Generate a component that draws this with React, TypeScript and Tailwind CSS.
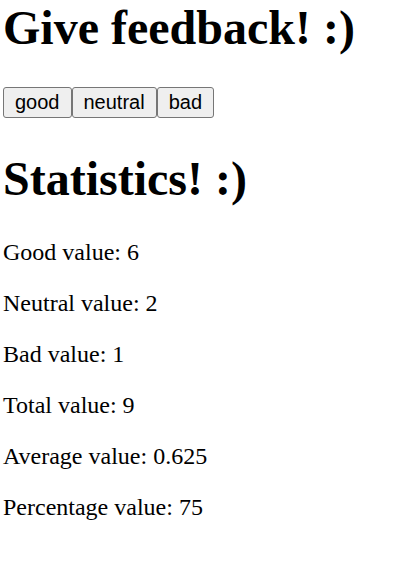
import React from "react";

const btn =
  "h-[31px] border border-[#767676] rounded-[3px] bg-[#efefef] px-[11px] text-[20px] leading-[23px] text-black font-['Liberation_Sans',Arial,sans-serif]";

const stats = [
  "Good value: 6",
  "Neutral value: 2",
  "Bad value: 1",
  "Total value: 9",
  "Average value: 0.625",
  "Percentage value: 75",
];

export default function App() {
  return (
    <div className="pl-[3px] text-black bg-white min-h-[561px] font-['Liberation_Serif','Times_New_Roman',serif]">
      <h1 className="text-[48px] font-bold leading-[55px] mb-[32px]">Give feedback! :)</h1>
      <div className="flex h-[32px] items-start">
        <button className={btn}>good</button>
        <button className={btn}>neutral</button>
        <button className={btn}>bad</button>
      </div>
      <h1 className="text-[48px] font-bold leading-[55px] mt-[32px] mb-[33px]">Statistics! :)</h1>
      <div className="flex flex-col gap-[24px]">
        {stats.map((s) => (
          <p key={s} className="text-[24px] leading-[27px]">
            {s}
          </p>
        ))}
      </div>
    </div>
  );
}
